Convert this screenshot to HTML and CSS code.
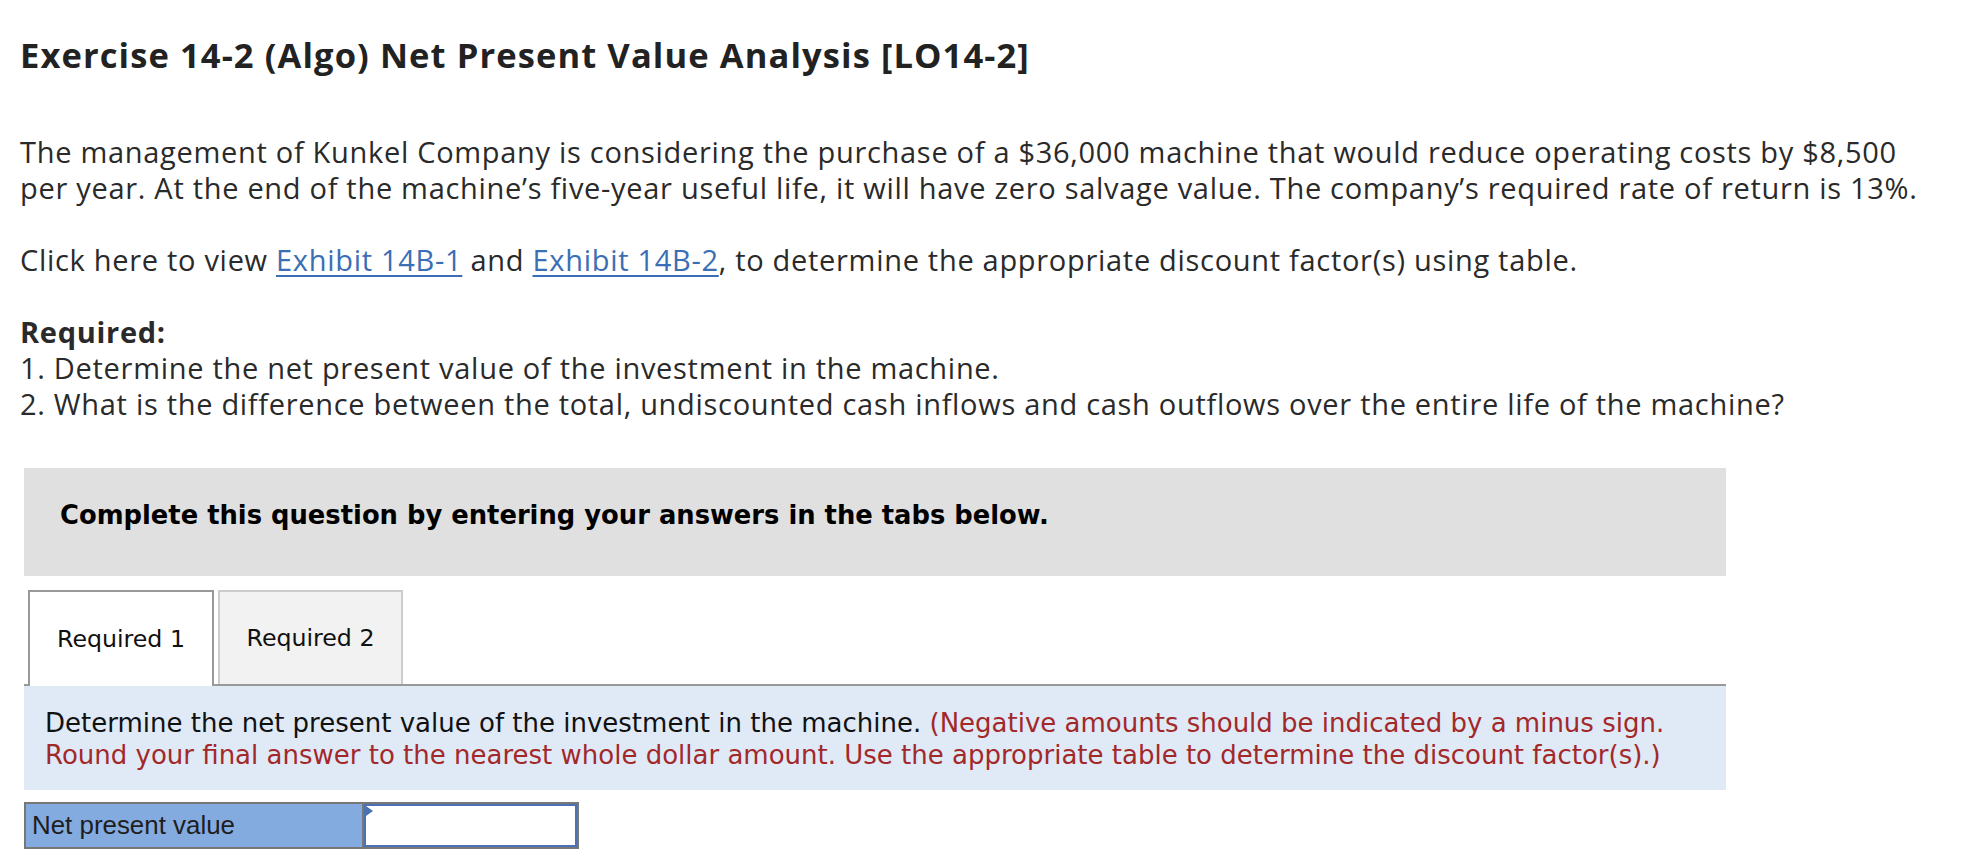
FILE: index.html
```html
<!DOCTYPE html>
<html lang="en">
<head>
<meta charset="utf-8">
<title>Exercise 14-2 (Algo) Net Present Value Analysis</title>
<link rel="stylesheet" href="styles.css">
</head>
<body>
<div class="page">
  <h1 class="title">Exercise 14-2 (Algo) Net Present Value Analysis [LO14-2]</h1>

  <div class="question">
    <p class="para">The management of Kunkel Company is considering the purchase of a $36,000 machine that would reduce operating costs by $8,500 per year. At the end of the machine’s five-year useful life, it will have zero salvage value. The company’s required rate of return is 13%.</p>
    <p class="para">Click here to view <a class="link" href="#">Exhibit 14B-1</a> and <a class="link" href="#">Exhibit 14B-2</a>, to determine the appropriate discount factor(s) using table.</p>
    <div class="required">
      <div class="required-head">Required:</div>
      <div class="required-item">1. Determine the net present value of the investment in the machine.</div>
      <div class="required-item">2. What is the difference between the total, undiscounted cash inflows and cash outflows over the entire life of the machine?</div>
    </div>
  </div>

  <div class="work">
    <div class="banner"><span class="banner-text">Complete this question by entering your answers in the tabs below.</span></div>

    <div class="tabs">
      <div class="tab tab-active"><span class="tab-label">Required 1</span></div>
      <div class="tab tab-idle"><span class="tab-label">Required 2</span></div>
    </div>

    <div class="instructions">Determine the net present value of the investment in the machine. <span class="hint">(Negative amounts should be indicated by a minus sign. Round your final answer to the nearest whole dollar amount. Use the appropriate table to determine the discount factor(s).)</span></div>

    <div class="answer-table">
      <div class="answer-label">Net present value</div>
      <div class="answer-cell"><span class="cell-marker"></span></div>
    </div>
  </div>
</div>
</body>
</html>
```
FILE: styles.css
```css
html, body {
  margin: 0;
  padding: 0;
  background: #ffffff;
}

.page {
  padding: 32px 20px 0 20px;
  font-family: "Open Sans", "Noto Sans", sans-serif;
  color: #2a2a2a;
}

.title {
  margin: 0;
  font-size: 34.5px;
  line-height: 46px;
  font-weight: 700;
  letter-spacing: 1.1px;
  color: #222222;
}

.question {
  max-width: 1900px;
  margin-top: 56px;
  font-size: 29px;
  line-height: 36px;
  letter-spacing: 0.7px;
}

.para {
  margin: 0 0 36px 0;
}

.link {
  color: #3a6eb5;
  text-decoration: underline;
  text-decoration-thickness: 2px;
  text-underline-offset: 4px;
}

.required-head {
  font-weight: 700;
}

.work {
  margin: 46px 0 0 4px;
  width: 1702px;
}

.banner {
  box-sizing: border-box;
  height: 108px;
  display: flex;
  align-items: center;
  padding: 0 0 15px 36px;
  background: #e0e0e0;
  font-family: "DejaVu Sans", Verdana, sans-serif;
  font-weight: 700;
  font-size: 25.8px;
  line-height: 32px;
  color: #000000;
}

.tabs {
  margin-top: 14px;
  display: flex;
  align-items: flex-start;
  gap: 4px;
  padding-left: 4px;
  border-bottom: 2px solid #999999;
  height: 94px;
}

.tab {
  box-sizing: border-box;
  width: 186px;
  height: 94px;
  display: flex;
  align-items: center;
  justify-content: center;
  font-family: "DejaVu Sans", Verdana, sans-serif;
  font-size: 23.7px;
  line-height: 30px;
  color: #111111;
  border-style: solid;
  border-width: 2px 2px 0 2px;
}

.tab-active {
  height: 96px;
  background: #ffffff;
  border-color: #999999;
  position: relative;
  z-index: 1;
}

.tab-idle {
  width: 185px;
  background: #f2f2f2;
  border-color: #cccccc;
}

.instructions {
  box-sizing: border-box;
  height: 104px;
  padding: 21px 40px 0 21px;
  background: #dfeaf6;
  font-family: "DejaVu Sans", Verdana, sans-serif;
  font-size: 26px;
  line-height: 32px;
  color: #111111;
}

.hint {
  color: #a3282a;
}

.answer-table {
  margin-top: 12px;
  width: 555px;
  height: 47px;
  box-sizing: border-box;
  border: 2px solid #777777;
  display: flex;
}

.answer-label {
  width: 338px;
  background: #84abdf;
  border-right: 2px solid #777777;
  display: flex;
  align-items: center;
  padding-left: 6px;
  box-sizing: border-box;
  font-family: "Liberation Sans", Arial, sans-serif;
  font-size: 25.9px;
  color: #1e1e1e;
}

.answer-cell {
  flex: 1;
  position: relative;
  background: #ffffff;
  border: 2px solid #4a72b2;
}

.cell-marker {
  position: absolute;
  left: 0;
  top: 0;
  width: 0;
  height: 0;
  border-top: 5px solid transparent;
  border-bottom: 5px solid transparent;
  border-left: 7px solid #4a72b2;
}
```
